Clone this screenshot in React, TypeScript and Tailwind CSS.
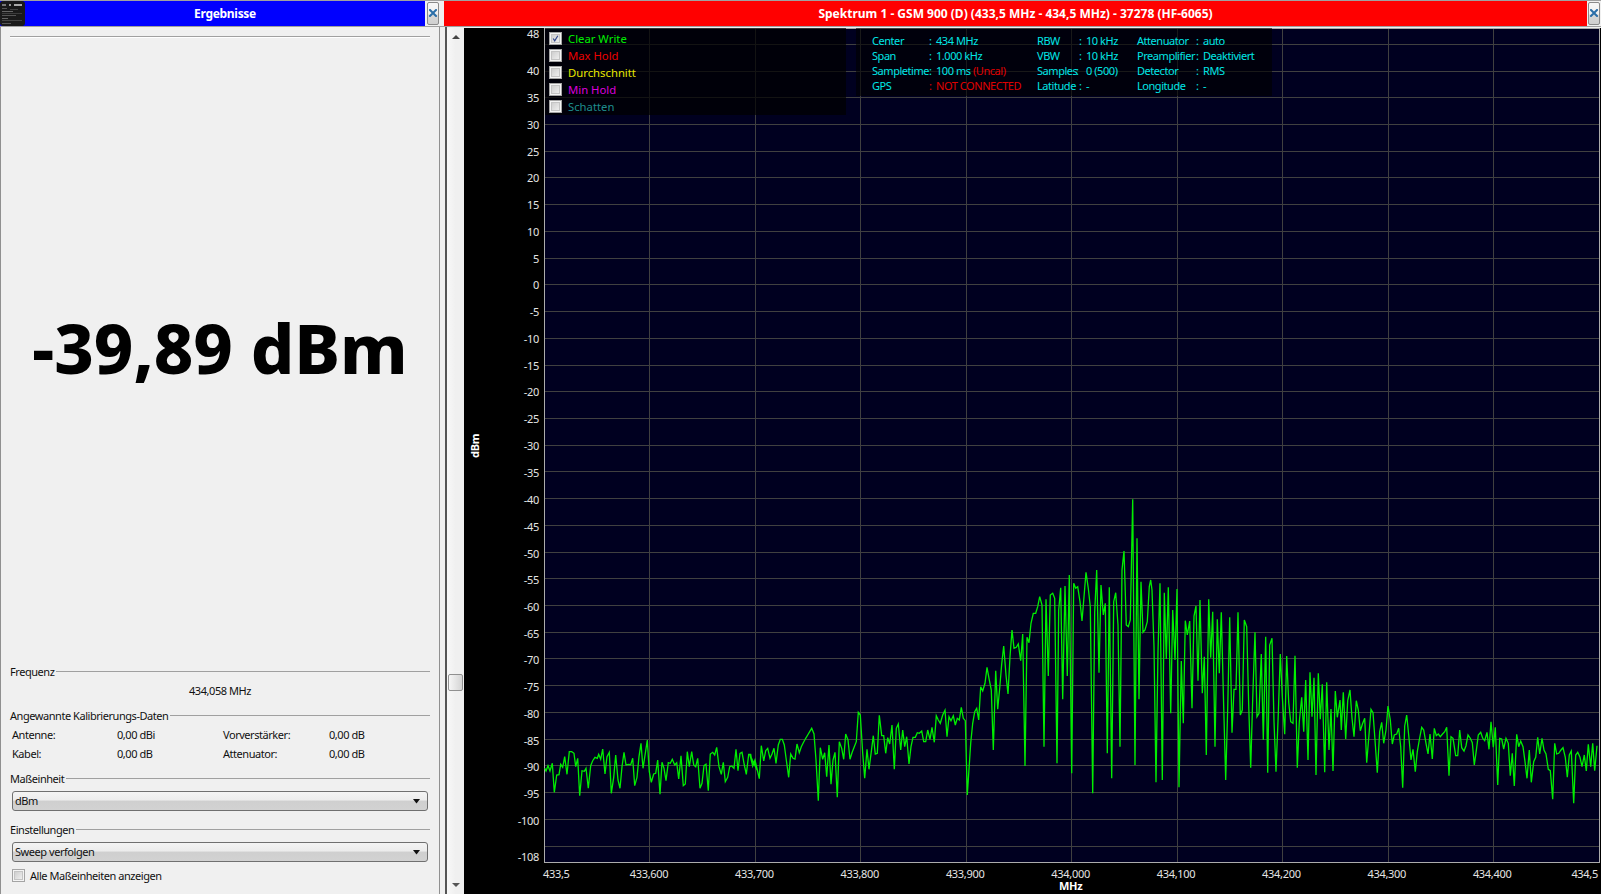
import React from "react";

const Z10 = [14,205,18,213,24,197,30,213,37,190,43,277,50,225,57,224,62,193,68,202,74,170,81,223,88,155,95,155,102,160,107,200,113,175,119,287,126,212,133,214,138,205,145,265,152,197,158,182,165,172,172,175,176,163,182,178,188,147,195,222,201,170,208,157,214,280,221,232,227,165,234,240,240,265,246,200,252,157,258,195,265,193,272,194,278,175,284,257,291,232,297,170,303,130,309,205,316,160,322,120,328,215,334,247,341,222,347,220,353,180,360,283,366,187,372,205,378,242,385,188,391,190,397,178,404,195,410,188,416,237,423,167,430,257,436,252,442,155,448,200,455,155,461,195,467,200,473,175,480,265,486,250,492,197,498,193,505,272,511,162,518,157,524,165,530,142,537,200,544,223,550,187,556,245,563,232,569,200,575,198,582,205,588,148,594,212,600,160,606,157,613,195,619,223,626,163,632,163,638,198,644,182,651,210];
const Z11 = [0,225,8,258,15,240,22,270,28,296,34,197,41,243,47,212,53,205,60,235,66,222,72,205,78,250,85,195,91,178,97,178,103,195,109,240,116,292,122,222,129,235,135,237,141,192,148,218,154,200,160,188,167,175,173,165,179,155,185,145,192,162,198,240,205,362,211,203,218,238,224,218,230,290,237,195,243,313,249,240,255,217,262,352,268,185,275,205,281,238,287,162,294,180,300,238,306,218,313,200,319,185,325,97,331,105,338,220,344,295,351,208,357,268,364,215,370,167,376,222,382,220,388,106,395,167,401,167,407,220,413,173,419,192,426,135,433,268,439,145,445,132,452,210,458,150,464,200,470,170,477,252,483,200,489,172,496,172,502,158,508,160,515,153,521,185,527,185,533,150,540,178,546,142,553,187,559,107,565,120,571,130,578,105,585,91,591,170,597,110,603,122,610,107,616,135,622,115,628,120,634,82,640,115,646,122,652,345];
const Z8 = [92,310,98,250,104,215,110,205,116,240,122,140,128,153,135,130,141,82,147,115,154,150,160,330,167,92,173,208,179,145,185,72,191,18,198,105,204,162,210,50,216,-30,222,25,229,22,235,12,242,62,248,-18,255,378,261,-8,267,8,273,-50,280,-80,287,-80,293,-100,299,-130,306,-105,312,320,318,-122,325,108,331,-135,338,-140,344,-125,351,370,356,-90,362,-157,368,178,375,-162,382,108,388,-195,395,400,401,-170,407,-155,413,-160,420,-115,426,-57,432,-130,438,-203,445,-155,451,-100,458,460,464,-85,470,-210,477,98,483,-165,490,-75,496,-110,502,340,508,-158,515,415,521,-115,527,-142,534,-45,540,320,546,-210,552,-267,559,-45,565,-40,571,-60,578,-422,585,375,591,-305];
const Z9 = [27,358,33,5,39,157,45,150,52,125,58,20,62,0,66,30,72,200,78,607,84,212,90,10,97,600,103,38,109,237,115,22,122,400,128,90,135,240,141,27,147,622,154,243,160,430,166,122,172,165,179,123,186,385,192,108,198,78,204,302,210,60,217,340,223,230,229,525,236,58,242,233,248,95,255,500,262,118,268,280,274,97,281,380,287,600,293,385,299,112,306,458,312,328,318,328,324,97,331,405,337,390,343,120,350,140,356,375,362,563,368,358,375,157,381,410,387,400,394,222,400,480,407,170,413,578,419,195,426,175,432,425,438,575,445,400,451,222,457,350,464,463,470,228,476,367,482,425,489,430,495,227,502,563,508,425,515,352,521,455,527,300,534,540,540,277,546,410,552,293,558,585,565,280,571,418,577,313,584,577,590,307,597,510,603,387,609,573,616,333,622,412];
const Z12 = [0,60,4,150,10,37,17,177,23,62,30,30,36,115,42,170,49,62,55,90,61,152,68,130,74,115,80,248,86,175,93,88,99,98,105,180,112,278,119,155,125,127,131,190,138,150,144,78,151,120,157,192,163,165,170,162,176,145,182,200,188,323,194,138,200,105,207,175,213,240,219,208,226,275,232,215,238,180,245,142,251,150,258,190,264,222,270,162,277,237,283,145,289,167,295,162,301,170,307,163,314,155,320,142,327,287,333,170,339,175,347,227,353,227,359,150,365,203,372,213,378,197,384,165,391,175,397,188,403,255,409,212,415,165,422,157,428,175,434,182,441,157,447,208,453,125,460,202,466,142,473,315,479,175,485,177,491,207,498,175,505,190,511,287,517,220,523,318,530,163,536,200,542,183,549,200,555,245,561,295,568,210,574,307,581,245,587,232,593,172,599,222,606,175,612,210,618,222,625,268,631,272,638,358,644,190,650,222,656,220,663,210,669,203,676,232,682,292,688,225,694,213,701,370,707,225,713,217,720,232,726,260,733,225,739,273,745,193,752,260,758,190,764,272,771,197];

function seg(a: number[], ox: number, oy: number) {
  const out: string[] = [];
  for (let i = 0; i < a.length; i += 2) {
    out.push((ox + a[i] / 3).toFixed(1) + "," + (oy + a[i + 1] / 3).toFixed(1));
  }
  return out;
}
const trace = [
  ...seg(Z10, 540, 700),
  ...seg(Z11, 750, 680),
  ...seg(Z8, 940, 640),
  ...seg(Z9, 1130, 580),
  ...seg(Z12, 1340, 680),
].join(" ");

const V_LINES = [649.5, 755.5, 860.5, 966.5, 1071.5, 1177.5, 1282.5, 1388.5, 1493.5];
const DB_LINES: number[] = [];
for (let d = 45; d >= -105; d -= 5) DB_LINES.push(d);
const dbY = (d: number) => Math.floor(44.3 + (45 - d) * 5.345) + 0.5;

const Y_LABELS: [string, number][] = [
  ["48", 34],
  ["40", 71],
  ...DB_LINES.filter((d) => d <= 35 && d >= -100).map((d) => [String(d), dbY(d) + 0.5 + (d < -30 ? 0.5 : 0)] as [string, number]),
  ["-108", 857],
];
const X_LABELS = ["433,600", "433,700", "433,800", "433,900", "434,000", "434,100", "434,200", "434,300", "434,400"];

const LEGEND: [string, string, boolean][] = [
  ["Clear Write", "text-[#00ee00]", true],
  ["Max Hold", "text-[#ee0000]", false],
  ["Durchschnitt", "text-[#e6e600]", false],
  ["Min Hold", "text-[#dc00dc]", false],
  ["Schatten", "text-[#1e8c8c]", false],
];

function CloseBtn() {
  return (
    <div className="h-[23px] w-[12px] rounded-[2px] border border-[#8a8a8a] bg-[linear-gradient(#f6f6f6_0%,#f0f0f0_50%,#d6d6d6_60%,#d0d0d0_100%)] flex justify-center pt-[6px]">
      <svg width="8" height="8" viewBox="0 0 8 8">
        <path d="M1 1 L7 7 M7 1 L1 7" stroke="#2a6ea8" strokeWidth="2" strokeLinecap="square" />
      </svg>
    </div>
  );
}

function GroupTitle({ children }: { children: React.ReactNode }) {
  return (
    <div className="h-[14px] flex items-center gap-[2px] leading-[14px]">
      <span>{children}</span>
      <div className="flex-1 h-[2px] border-t border-[#a0a0a0]" />
    </div>
  );
}

function Combo({ label }: { label: string }) {
  return (
    <div className="mx-[2px] h-[20px] rounded-[3px] border border-[#707070] bg-[linear-gradient(#f4f4f4_0%,#ececec_45%,#cfcfcf_50%,#d2d2d2_100%)] flex items-center justify-between pl-[2px] pr-[6px]">
      <span>{label}</span>
      <svg width="8" height="5" viewBox="0 0 8 5">
        <path d="M0 0 H7 L3.5 4.5 Z" fill="#111" />
      </svg>
    </div>
  );
}

function Check({ checked }: { checked?: boolean }) {
  return (
    <div className="w-[13px] h-[13px] shrink-0 border border-[#a4a4a4] bg-[#f4f4f4] p-[1px]">
      <div className="w-full h-full bg-gradient-to-br from-[#cfcfcf] to-[#eeeeee] border border-[#c4c4c4] flex items-center justify-center">
        {checked && (
          <svg width="9" height="9" viewBox="0 0 9 9">
            <path d="M1.5 4.5 L3.5 7.5 L7.5 1" fill="none" stroke="#33478c" strokeWidth="1.5" />
          </svg>
        )}
      </div>
    </div>
  );
}

export default function App() {
  return (
    <div className="w-[1601px] h-[894px] overflow-hidden flex flex-col bg-[#f0f0f0] text-[11px] tracking-[-0.45px] text-[#111] font-['Noto_Sans','DejaVu_Sans',sans-serif]">
      {/* title bars */}
      <div className="h-[27px] shrink-0 flex border-t border-b border-[#a0a0a0] text-white font-bold text-[12px] tracking-normal">
        <div className="w-[425px] bg-[#0000ff] flex items-center">
          <svg width="25" height="25" viewBox="0 0 25 25" className="shrink-0">
            <rect width="25" height="25" rx="3" fill="#1a1a1a" />
            <rect x="2" y="3" width="4" height="2" fill="#777" />
            <rect x="9" y="3" width="2" height="2" fill="#999" />
            <rect x="14" y="3" width="8" height="2" fill="#aaa" />
            <rect x="2" y="7" width="5" height="1" fill="#555" />
            <rect x="10" y="8" width="8" height="1" fill="#444" />
            <rect x="2" y="10" width="11" height="1" fill="#666" />
            <rect x="2" y="12" width="20" height="1" fill="#3c3c3c" />
            <rect x="2" y="14" width="14" height="1" fill="#555" />
            <rect x="2" y="17" width="6" height="1" fill="#666" />
            <rect x="2" y="19" width="20" height="1" fill="#444" />
            <rect x="2" y="22" width="9" height="1" fill="#555" />
          </svg>
          <div className="flex-1 text-center pt-px tracking-[-0.3px]">Ergebnisse</div>
        </div>
        <div className="w-[19px] bg-[#f0f0f0] pl-[2px] pt-px">
          <CloseBtn />
        </div>
        <div className="flex-1 bg-[#ff0000] flex items-center justify-center pt-px">
          Spektrum 1 - GSM 900 (D) (433,5 MHz - 434,5 MHz) - 37278 (HF-6065)
        </div>
        <div className="w-[14px] bg-[#f0f0f0] pl-[1px] pt-px">
          <CloseBtn />
        </div>
      </div>

      <div className="flex-1 flex min-h-0">
        {/* left panel */}
        <div className="w-[440px] shrink-0 border-l border-r border-[#909090] flex flex-col pl-[9px] pr-[9px] pb-[12px]">
          <div className="mt-[9px] h-[2px] border-t border-[#a0a0a0] bg-white" />
          <div className="flex-1 flex items-center justify-center pb-[7px] text-black text-[68.5px] font-extrabold tracking-normal leading-none">
            -39,89 dBm
          </div>
          <GroupTitle>Frequenz</GroupTitle>
          <div className="mt-[5px] h-[14px] leading-[14px] text-center">434,058 MHz</div>
          <div className="mt-[11px]">
            <GroupTitle>Angewannte Kalibrierungs-Daten</GroupTitle>
          </div>
          <div className="mt-[5px] pl-[2px] grid grid-cols-[105px_106px_106px_1fr] gap-y-[5px] leading-[14px]">
            <span>Antenne:</span>
            <span>0,00 dBi</span>
            <span>Vorverstärker:</span>
            <span>0,00 dB</span>
            <span>Kabel:</span>
            <span>0,00 dB</span>
            <span>Attenuator:</span>
            <span>0,00 dB</span>
          </div>
          <div className="mt-[11px] mb-[5px]">
            <GroupTitle>Maßeinheit</GroupTitle>
          </div>
          <Combo label="dBm" />
          <div className="mt-[12px] mb-[5px]">
            <GroupTitle>Einstellungen</GroupTitle>
          </div>
          <Combo label="Sweep verfolgen" />
          <div className="mt-[7px] ml-[2px] flex items-center gap-[5px] leading-[13px]">
            <Check />
            <span>Alle Maßeinheiten anzeigen</span>
          </div>
        </div>

        {/* splitter */}
        <div className="w-[5px] shrink-0" />
        <div className="w-[2px] shrink-0 bg-[#555]" />

        {/* scrollbar */}
        <div className="w-[17px] shrink-0 mt-px bg-gradient-to-r from-[#f8f8f8] via-[#f0f0f0] to-[#f0f0f0] relative flex flex-col items-center justify-between py-[7px]">
          <svg width="8" height="4" viewBox="0 0 8 4"><path d="M0 4 L4 0 L8 4 Z" fill="#444" /></svg>
          <div className="absolute left-[1px] top-[646px] w-[15px] h-[17px] rounded-[2px] border border-[#909090] bg-gradient-to-r from-[#f6f6f6] to-[#d4d4d4]" />
          <svg width="8" height="4" viewBox="0 0 8 4"><path d="M0 0 H8 L4 4 Z" fill="#555" /></svg>
        </div>

        {/* chart */}
        <div className="flex-1 mt-px bg-black relative text-[#e4e4e4] tracking-[-0.3px]">
          <svg className="absolute left-0 top-0" width="1137" height="866" viewBox="464 28 1137 866">
            <rect x="544.5" y="28.5" width="1055" height="834" fill="#000020" stroke="#ababab" strokeWidth="1" />
            {V_LINES.map((x) => (
              <line key={x} x1={x} x2={x} y1="29" y2="862" stroke="#404040" strokeWidth="1" />
            ))}
            {DB_LINES.map((d) => (
              <line key={d} x1="545" x2="1599" y1={dbY(d)} y2={dbY(d)} stroke="#404040" strokeWidth="1" />
            ))}
            <polyline points={trace} fill="none" stroke="#00ee00" strokeWidth="1.3" strokeLinejoin="miter" />
          </svg>

          {Y_LABELS.map(([t, y]) => (
            <span
              key={t}
              className="absolute right-[1062px] leading-[12px] whitespace-nowrap"
              style={{ top: y - 28 - 6 }}
            >
              {t}
            </span>
          ))}

          <span className="absolute left-[79px] top-[839px] leading-[14px]">433,5</span>
          {X_LABELS.map((t, i) => (
            <span
              key={t}
              className="absolute w-[80px] text-center top-[839px] leading-[14px]"
              style={{ left: 649 + i * 105.4 - 464 - 40 }}
            >
              {t}
            </span>
          ))}
          <span className="absolute right-[3px] top-[839px] leading-[14px]">434,5</span>
          <span className="absolute left-[595px] top-[851px] leading-[14px] font-bold text-white">MHz</span>
          <span className="absolute left-0 top-[412px] w-[22px] -rotate-90 leading-[14px] font-bold text-white whitespace-nowrap">
            dBm
          </span>

          {/* legend overlay */}
          <div className="absolute left-[81px] top-0 w-[301px] h-[87px] bg-[#000000]/70 pt-[4px] pl-[4px] flex flex-col gap-[4px] tracking-normal">
            {LEGEND.map(([t, c, on]) => (
              <div key={t} className="h-[13px] flex items-center gap-[6px]">
                <Check checked={on} />
                <span className={c + " text-[11.3px] leading-[13px]"}>{t}</span>
              </div>
            ))}
          </div>

          {/* info overlay */}
          <div className="absolute left-[392px] top-0 w-[416px] h-[68px] bg-[#000000]/60 pl-[16px] pt-[5px] text-[#00e6e6] tracking-[-0.45px]">
            <div className="grid grid-cols-[57px_7px_101px_42px_7px_51px_59px_7px_1fr] auto-rows-[15px] leading-[15px] whitespace-nowrap">
              <span>Center</span><span>:</span><span>434 MHz</span>
              <span>RBW</span><span>:</span><span>10 kHz</span>
              <span>Attenuator</span><span>:</span><span>auto</span>

              <span>Span</span><span>:</span><span>1.000 kHz</span>
              <span>VBW</span><span>:</span><span>10 kHz</span>
              <span>Preamplifier</span><span>:</span><span>Deaktiviert</span>

              <span>Sampletime</span><span>:</span><span>100 ms <span className="text-[#e00000]">(Uncal)</span></span>
              <span>Samples</span><span className="-ml-[3px]">:</span><span>0 (500)</span>
              <span>Detector</span><span>:</span><span>RMS</span>

              <span>GPS</span><span className="text-[#e00000]">:</span><span className="text-[#e00000]">NOT CONNECTED</span>
              <span>Latitude</span><span>:</span><span>-</span>
              <span>Longitude</span><span>:</span><span>-</span>
            </div>
          </div>
        </div>
      </div>
    </div>
  );
}
